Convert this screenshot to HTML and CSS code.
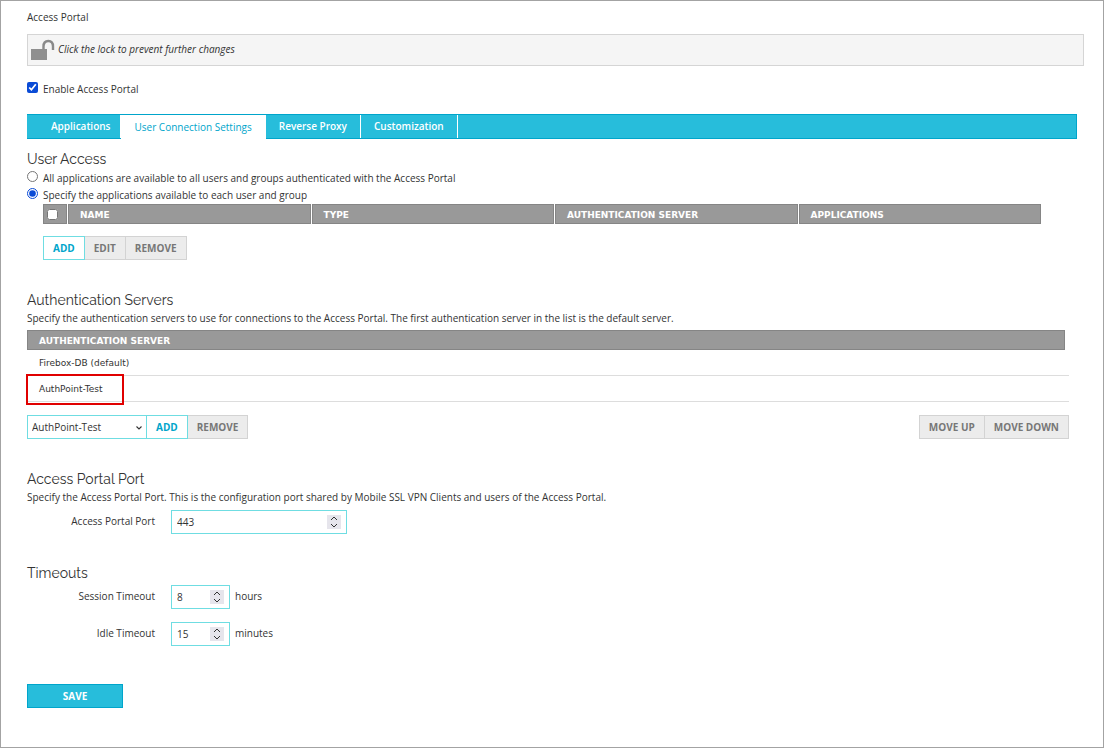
FILE: index.html
```html
<!DOCTYPE html>
<html lang="en">
<head>
<meta charset="UTF-8" />
<meta name="viewport" content="width=device-width, initial-scale=1" />
<title>Access Portal</title>
<link rel="stylesheet" href="styles.css">
</head>
<body>
<main class="page">
  <h1 class="page-title">Access Portal</h1>

  <!-- LOCK BAR -->
  <button type="button" class="lock-bar">
    <svg class="lock-icon" viewBox="0 0 24 22" aria-hidden="true">
      <path d="M0 10h16v11H0z" fill="#8f8f8f"/>
      <path d="M12.500 10V7.500C12.500 4 14.500 2 17.300 2S22 4 22 7.500V11" fill="none" stroke="#8a8a8a" stroke-width="2.4"/>
    </svg>
    <span>Click the lock to prevent further changes</span>
  </button>

  <label class="check enable"><input type="checkbox" checked> Enable Access Portal</label>

  <!-- TABS -->
  <nav class="tabs">
    <a href="#applications" class="first">Applications</a>
    <a href="#connection" class="active" aria-current="page">User Connection Settings</a>
    <a href="#proxy">Reverse Proxy</a>
    <a href="#customization">Customization</a>
  </nav>

  <!-- USER ACCESS -->
  <section class="user-access" id="connection">
    <h2>User Access</h2>
    <label class="check"><input type="radio" name="access"> All applications are available to all users and groups authenticated with the Access Portal</label>
    <label class="check"><input type="radio" name="access" checked> Specify the applications available to each user and group</label>
    <div class="access-list">
      <table class="grid">
        <thead>
          <tr>
            <th class="select-col"><input type="checkbox" aria-label="Select all"></th>
            <th>NAME</th>
            <th>TYPE</th>
            <th>AUTHENTICATION SERVER</th>
            <th>APPLICATIONS</th>
          </tr>
        </thead>
      </table>
      <div class="btn-group">
        <button type="button" class="btn btn-add">ADD</button>
        <button type="button" class="btn" disabled>EDIT</button>
        <button type="button" class="btn" disabled>REMOVE</button>
      </div>
    </div>
  </section>

  <!-- AUTHENTICATION SERVERS -->
  <section class="servers">
    <h2>Authentication Servers</h2>
    <p>Specify the authentication servers to use for connections to the Access Portal. The first authentication server in the list is the default server.</p>
    <table class="grid server-grid">
      <thead>
        <tr><th>AUTHENTICATION SERVER</th></tr>
      </thead>
      <tbody>
        <tr><td>Firebox-DB (default)</td></tr>
        <tr><td class="marked">AuthPoint-Test</td></tr>
      </tbody>
    </table>
    <div class="server-actions">
      <div class="btn-group">
        <div class="select-box">
          <select aria-label="Authentication server">
            <option>AuthPoint-Test</option>
          </select>
          <svg viewBox="0 0 6 4" aria-hidden="true"><path d="M.5.5 3 3 5.500.5" fill="none" stroke="#333" stroke-width="1.1"/></svg>
        </div>
        <button type="button" class="btn btn-add">ADD</button>
        <button type="button" class="btn" disabled>REMOVE</button>
      </div>
      <div class="btn-group">
        <button type="button" class="btn" disabled>MOVE UP</button>
        <button type="button" class="btn" disabled>MOVE DOWN</button>
      </div>
    </div>
  </section>

  <!-- PORT -->
  <section class="port">
    <h2>Access Portal Port</h2>
    <p>Specify the Access Portal Port. This is the configuration port shared by Mobile SSL VPN Clients and users of the Access Portal.</p>
    <div class="field">
      <label for="port">Access Portal Port</label>
      <div class="number wide">
        <input type="number" id="port" value="443">
        <svg viewBox="0 0 14 14" aria-hidden="true"><path d="M4 5 7 2l3 3M4 9l3 3 3-3"/></svg>
      </div>
    </div>
  </section>

  <!-- TIMEOUTS -->
  <section class="timeouts">
    <h2>Timeouts</h2>
    <div class="field">
      <label for="session">Session Timeout</label>
      <div class="number">
        <input type="number" id="session" value="8">
        <svg viewBox="0 0 14 14" aria-hidden="true"><path d="M4 5 7 2l3 3M4 9l3 3 3-3"/></svg>
      </div>
      <span class="unit">hours</span>
    </div>
    <div class="field">
      <label for="idle">Idle Timeout</label>
      <div class="number">
        <input type="number" id="idle" value="15">
        <svg viewBox="0 0 14 14" aria-hidden="true"><path d="M4 5 7 2l3 3M4 9l3 3 3-3"/></svg>
      </div>
      <span class="unit">minutes</span>
    </div>
  </section>

  <button type="submit" class="save">SAVE</button>
</main>
</body>
</html>
```
FILE: styles.css
```css
/* Reset */
*, *::before, *::after {
  box-sizing: border-box;
}
body, h1, h2, p {
  margin: 0;
}
button, input, select {
  margin: 0;
  font-family: inherit;
  font-size: inherit;
  color: inherit;
}

/* Variables */
:root {
  --cyan: #27bddb;
  --cyan-dark: #00a5cb;
  --cyan-light: #6fdde2;
  --gray: #999;
  --gray-dark: #858585;
  --gray-light: #ececec;
  --text: #333;
}

body {
  background: white;
  color: var(--text);
  font-family: "Open Sans", "Noto Sans", sans-serif;
  font-size: 10px;
  line-height: 16px;
}
.page {
  min-height: 100vh;
  border: 1px solid #a3a3a3;
  padding: 8px 19px 38px 26px;
}
.page-title {
  font-size: 10px;
  font-weight: 400;
  margin-bottom: 9px;
}
h2 {
  font-family: Raleway, Lato, sans-serif;
  font-size: 14px;
  font-weight: 400;
  line-height: 20px;
}

/* Lock bar */
.lock-bar {
  display: flex;
  align-items: center;
  gap: 3px;
  width: 100%;
  height: 32px;
  padding: 0 3px 3px;
  border: 1px solid #d5d5d5;
  background: #f5f5f5;
  font-style: italic;
  text-align: left;
}
.lock-icon {
  width: 24px;
  height: 22px;
  margin-top: 2px;
}

/* Check boxes and radios */
.check {
  display: flex;
  align-items: center;
  gap: 5px;
  height: 17px;
}
.check input {
  width: 11px;
  height: 11px;
  margin-bottom: 2px;
  accent-color: #0a4bd6;
}
.enable {
  margin: 14px 0 17px;
}

/* Tabs */
.tabs {
  display: flex;
  height: 25px;
  margin-right: 7px;
  background: var(--cyan);
  border: 1px solid var(--cyan-dark);
  border-width: 1px 1px 1px 0;
  line-height: 23px;
}
.tabs a {
  padding: 0 13px;
  border-right: 1px solid white;
  color: white;
  font-weight: 600;
  text-decoration: none;
}
.tabs .first {
  padding: 0 10px 0 24px;
}
.tabs .active {
  height: 24px;
  background: white;
  color: var(--cyan-dark);
  font-weight: 400;
  line-height: 25px;
}

/* Tables */
.grid {
  width: 100%;
  border-collapse: separate;
  border-spacing: 0;
  table-layout: fixed;
  font-family: Verdana, "DejaVu Sans", sans-serif;
  font-size: 9px;
}
.grid th {
  height: 20px;
  padding: 1px 12px 0;
  background: var(--gray);
  border-right: 1px solid white;
  box-shadow: inset 0 0 0 1px var(--gray-dark);
  color: white;
  line-height: 18px;
  text-align: left;
}
.grid td {
  height: 26px;
  padding: 1px 12px 0;
  border-bottom: 1px solid #ddd;
}
.grid .select-col {
  width: 25px;
  padding: 0 4px;
}
.select-col input {
  display: block;
  width: 11px;
  height: 11px;
}

/* Buttons */
.btn-group {
  display: flex;
}
.btn {
  height: 24px;
  padding: 0 9px;
  border: 1px solid #d3d3d3;
  background: var(--gray-light);
  color: #777;
  font-weight: 700;
}
.btn + .btn {
  border-left-width: 0;
}
.btn-add {
  border-color: var(--cyan-light);
  background: white;
  color: var(--cyan-dark);
}

/* User access */
.user-access {
  padding-top: 10px;
}
.access-list {
  margin: 1px 42px 0 16px;
}
.access-list .btn-group {
  margin-top: 12px;
}

/* Authentication servers */
.servers {
  margin: 30px 15px 0 0;
}
.server-grid {
  margin-top: 4px;
}
.server-grid th {
  border-right-width: 4px;
}
.marked {
  position: relative;
}
.marked::after {
  content: "";
  position: absolute;
  top: -2px;
  left: -1px;
  width: 98px;
  height: 31px;
  border: 2px solid #e00000;
}
.server-actions {
  display: flex;
  justify-content: space-between;
  margin-top: 13px;
}
.select-box {
  position: relative;
  width: 120px;
}
.select-box select {
  width: 100%;
  height: 24px;
  padding: 0 4px;
  border: 1px solid var(--cyan-light);
  border-radius: 0;
  background: white;
  appearance: none;
}
.select-box svg {
  position: absolute;
  top: 11px;
  right: 5px;
  width: 6px;
  height: 4px;
  pointer-events: none;
}
.select-box + .btn {
  border-left-width: 0;
}

/* Fields */
.port {
  margin-top: 30px;
}
.field {
  display: flex;
  align-items: center;
}
.field label {
  width: 128px;
  margin-right: 16px;
  padding-bottom: 2px;
  text-align: right;
}
.number {
  display: flex;
  align-items: center;
  width: 59px;
  height: 24px;
  padding: 0 5px;
  border: 1px solid var(--cyan-light);
}
.number.wide {
  width: 176px;
}
.number input {
  flex: 1;
  min-width: 0;
  padding: 0;
  border: 0;
  outline: none;
  background: none;
  appearance: textfield;
}
.number input::-webkit-inner-spin-button {
  appearance: none;
}
.number svg {
  width: 14px;
  height: 14px;
  background: #e6e5ec;
  fill: none;
  stroke: #333;
}
.unit {
  margin-left: 5px;
  padding-bottom: 2px;
}
.port .field {
  margin-top: 5px;
}
.timeouts {
  margin-top: 29px;
}
.timeouts .field {
  margin-top: 2px;
}
.timeouts .field + .field {
  margin-top: 13px;
}

/* Save */
.save {
  display: block;
  width: 96px;
  height: 24px;
  margin-top: 38px;
  border: 1px solid var(--cyan-dark);
  background: var(--cyan);
  color: white;
  font-weight: 700;
}
```
